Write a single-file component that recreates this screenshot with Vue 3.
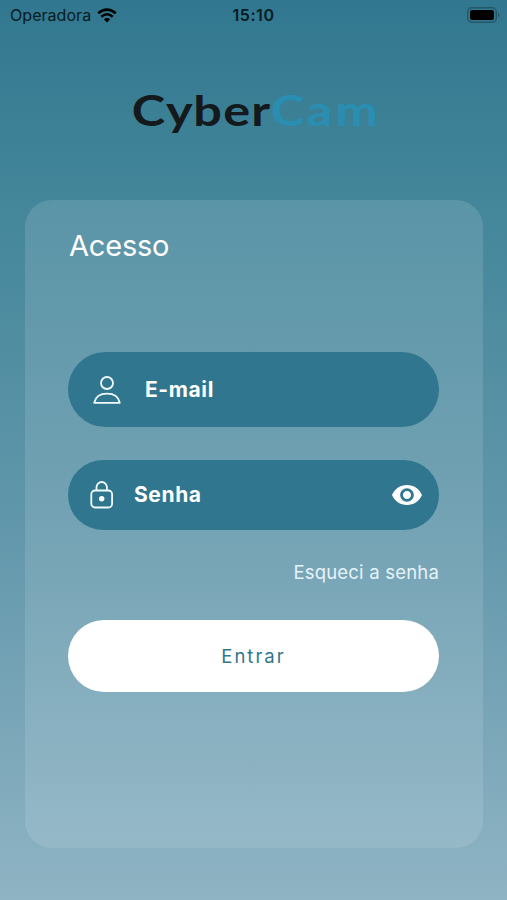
<template>
  <main class="screen">
    <header class="status-bar">
      <div class="carrier">
        <span>Operadora</span>
        <svg class="wifi" viewBox="0 0 20 15">
          <path d="M1.2 5.3Q10-2.2 18.8 5.3" />
          <path d="M4.3 8.7Q10 3.8 15.7 8.7" />
          <path class="wifi-dot" d="M6.8 11.3Q10 8.7 13.2 11.3L10 14.6Z" />
        </svg>
      </div>
      <span class="time">15:10</span>
      <svg class="battery" viewBox="0 0 33 16">
        <rect class="battery-case" x=".7" y=".7" width="28.6" height="14.6" rx="4.3" />
        <rect x="3" y="3" width="24" height="10" rx="2" />
        <path class="battery-tip" d="M31 5.5q3 2.5 0 5z" />
      </svg>
    </header>

    <svg class="logo" viewBox="0 0 270 70">
      <g transform="scale(1.2 1)">
        <text x="9 37.5 60.3 85.3 108.5" y="46.5">Cyber</text>
        <text class="logo-cam" x="124.8 154.8 178.7" y="46.5">Cam</text>
      </g>
    </svg>

    <form class="card" @submit.prevent>
      <h1>Acesso</h1>
      <label class="field email">
        <svg class="user" viewBox="0 0 28 28">
          <circle cx="14" cy="7" r="6" />
          <path d="M1.2 26.8C2.5 20.5 7.2 17.6 14 17.6s11.5 2.9 12.8 9.2z" />
        </svg>
        <input v-model="email" type="email" placeholder="E-mail" />
      </label>
      <label class="field password">
        <svg class="lock" viewBox="0 0 24 28">
          <path d="M6.5 9.5V6.2a5.2 5.2 0 0 1 10.4 0v3.3" />
          <rect x="1.3" y="9.5" width="20.8" height="17" rx="3.7" />
          <circle class="keyhole" cx="11.7" cy="17.8" r="2.7" />
        </svg>
        <input v-model="password" :type="showPassword ? 'text' : 'password'" placeholder="Senha" />
        <button class="toggle" type="button" @click="showPassword = !showPassword">
          <svg viewBox="1 4.5 22 15" preserveAspectRatio="none">
            <path d="M12 4.5C7 4.5 2.73 7.61 1 12c1.73 4.39 6 7.5 11 7.5s9.27-3.11 11-7.5c-1.73-4.39-6-7.5-11-7.5zM12 17c-2.76 0-5-2.24-5-5s2.24-5 5-5 5 2.24 5 5-2.24 5-5 5zm0-8c-1.66 0-3 1.34-3 3s1.34 3 3 3 3-1.34 3-3-1.34-3-3-3z" />
          </svg>
        </button>
      </label>
      <a class="forgot" href="#" @click.prevent>Esqueci a senha</a>
      <button class="submit" type="submit">Entrar</button>
    </form>
  </main>
</template>

<script setup>
import { ref } from 'vue';

const email = ref('');
const password = ref('');
const showPassword = ref(false);
</script>

<style>
body {
  margin: 0;
}
</style>

<style scoped>
* {
  box-sizing: border-box;
}

.screen {
  height: 900px;
  overflow: hidden;
  background: linear-gradient(#31778f 0%, #43869a 22%, #6096aa 57%, #8fb4c4 100%);
  font-family: Inter, "Liberation Sans", sans-serif;
}

.status-bar {
  display: grid;
  grid-template-columns: 1fr auto 1fr;
  align-items: center;
  height: 30px;
  padding: 0 7px 0 10px;
  color: #071b22;
  font-size: 16px;
}

.carrier {
  display: flex;
  align-items: center;
  gap: 6px;
  letter-spacing: 0.05px;
}

.wifi {
  width: 20px;
  height: 15px;
  fill: none;
  stroke: #000;
  stroke-width: 2.6;
}

.wifi-dot {
  fill: #000;
  stroke: none;
}

.time {
  margin-right: 3px;
  font-weight: 600;
  letter-spacing: 0.6px;
}

.battery {
  justify-self: end;
  width: 33px;
  height: 16px;
}

.battery-case {
  fill: none;
  stroke: #235869;
  stroke-width: 1.4;
}

.battery-tip {
  fill: #235869;
}

.logo {
  display: block;
  width: 270px;
  height: 70px;
  margin: 50px 0 0 121px;
  fill: #14191c;
  font-family: Lato, sans-serif;
  font-size: 42px;
  font-weight: 700;
}

.logo-cam {
  fill: #298eb2;
}

.card {
  display: flex;
  flex-direction: column;
  width: 458px;
  height: 648px;
  margin: 50px 0 0 25px;
  padding: 28px 43px 0;
  border-radius: 27px;
  background: linear-gradient(rgba(255, 255, 255, 0.12), rgba(255, 255, 255, 0.11));
}

h1 {
  height: 36px;
  margin: 0 0 88px 1px;
  color: #fff;
  font-size: 29px;
  font-weight: 400;
  line-height: 36px;
  letter-spacing: -0.2px;
}

.field {
  display: flex;
  align-items: center;
  width: 371px;
  border-radius: 38px;
  background: #2f768e;
}

.email {
  height: 75px;
  padding-left: 25px;
}

.password {
  height: 70px;
  margin-top: 33px;
  padding: 0 17px 0 22px;
}

.user,
.lock {
  flex: none;
  height: 28px;
  fill: none;
  stroke: #f0fbff;
  stroke-width: 1.8;
  stroke-linejoin: round;
}

.user {
  width: 28px;
}

.lock {
  width: 24px;
}

.keyhole {
  fill: #fff;
  stroke: none;
}

input {
  flex: 1;
  min-width: 0;
  margin-left: 24px;
  padding: 0;
  border: 0;
  outline: none;
  background: none;
  color: #fff;
  font: 700 21px Inter, sans-serif;
  letter-spacing: 0.6px;
}

.password input {
  margin: 0 0 2px 20px;
}

input::placeholder {
  color: #fff;
  opacity: 1;
}

.toggle {
  width: 30px;
  height: 20px;
  padding: 0;
  border: 0;
  background: none;
}

.toggle svg {
  display: block;
  width: 30px;
  height: 20px;
  fill: #fff;
}

.forgot {
  align-self: flex-end;
  height: 24px;
  margin: 30px 1px 0 0;
  color: #e6f3f8;
  font-size: 18.5px;
  font-weight: 400;
  line-height: 24px;
  letter-spacing: 0.2px;
  text-decoration: none;
}

.submit {
  width: 371px;
  height: 72px;
  margin-top: 36px;
  border: 0;
  border-radius: 36px;
  background: #fff;
  color: #2f768e;
  font: 400 18.5px Inter, sans-serif;
  letter-spacing: 2px;
}
</style>
